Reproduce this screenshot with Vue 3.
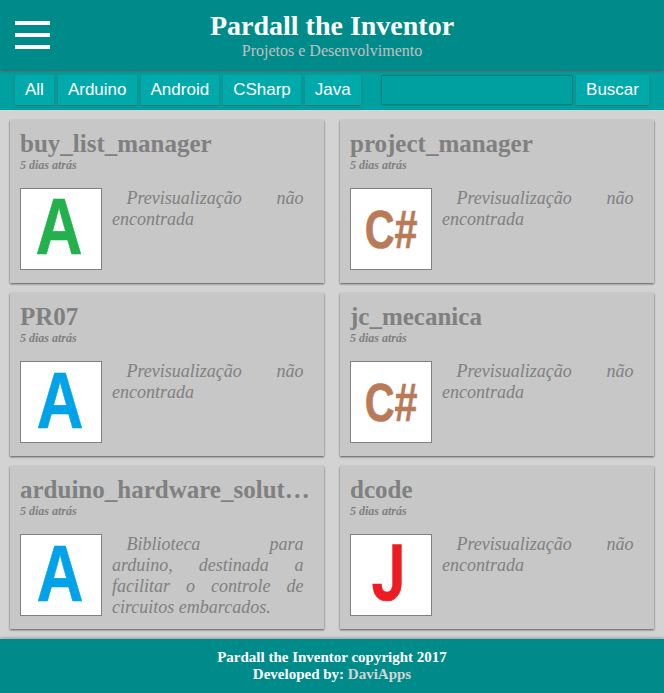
<script setup>
const filters = ['All', 'Arduino', 'Android', 'CSharp', 'Java']
const missing = 'Previsualização não encontrada'
const green = { text: 'A', color: '#22b14c', size: 80, weight: 0.5, transform: 'translate(14.5 64.8) scale(.815 1)' }
const blue = { text: 'A', color: '#00a2e8', size: 80, weight: 0.5, transform: 'translate(15.5 65.8) scale(.815 1)' }
const csharp = { text: 'C#', color: '#b97a57', size: 54, weight: 0.6, transform: 'translate(13.7 58.8) scale(.765 1)' }
const java = { text: 'J', color: '#ed1c24', size: 77, weight: 0.6, family: 'Roboto, sans-serif', transform: 'translate(20.6 65) scale(.78 1)' }
const projects = [
  { name: 'buy_list_manager', logo: green, description: missing },
  { name: 'project_manager', logo: csharp, description: missing },
  { name: 'PR07', logo: blue, description: missing },
  { name: 'jc_mecanica', logo: csharp, description: missing },
  { name: 'arduino_hardware_solutions', logo: blue, description: 'Biblioteca para arduino, destinada a facilitar o controle de circuitos embarcados.' },
  { name: 'dcode', logo: java, description: missing },
]
</script>

<template>
  <div class="page">
    <header class="header">
      <button class="menu" aria-label="Menu"><span></span><span></span><span></span></button>
      <div class="brand">
        <h1>Pardall the Inventor</h1>
        <p>Projetos e Desenvolvimento</p>
      </div>
    </header>
    <nav class="nav">
      <button v-for="f in filters" :key="f" class="btn">{{ f }}</button>
      <input class="search" type="text" />
      <button class="btn">Buscar</button>
    </nav>
    <main class="grid">
      <article v-for="p in projects" :key="p.name" class="card">
        <h2>{{ p.name }}</h2>
        <p class="date">5 dias atrás</p>
        <div class="content">
          <svg class="logo" viewBox="0 0 80 80">
            <text :fill="p.logo.color" :stroke="p.logo.color" :stroke-width="p.logo.weight" :font-family="p.logo.family" :font-size="p.logo.size" :transform="p.logo.transform">{{ p.logo.text }}</text>
          </svg>
          <p class="description">{{ p.description }}</p>
        </div>
      </article>
    </main>
    <footer class="footer">
      <p>Pardall the Inventor copyright 2017</p>
      <p>Developed by: <a>DaviApps</a></p>
    </footer>
  </div>
</template>

<style>
body { margin: 0; background: #d3d3d3; }
</style>

<style scoped>
* { box-sizing: border-box; }
h1, h2, p { margin: 0; }
.page {
  width: 664px;
  height: 693px;
  display: flex;
  flex-direction: column;
  overflow: hidden;
  background: #d3d3d3;
  font-family: "Liberation Serif", "Times New Roman", serif;
}
.header {
  position: relative;
  z-index: 1;
  flex: none;
  height: 70px;
  display: grid;
  grid-template-columns: 35px 1fr 35px;
  padding: 0 15px;
  background: #008b8b;
  box-shadow: 0 1px 3px #555;
}
.menu {
  height: 28px;
  margin: 21px 0 0;
  padding: 0;
  border: 0;
  background: none;
  display: flex;
  flex-direction: column;
  justify-content: space-between;
}
.menu span { width: 35px; height: 4px; background: #fff; }
.brand { padding-top: 10px; text-align: center; }
h1 { font-size: 28px; line-height: 32px; color: #fff; }
.brand p { font-size: 16px; line-height: 18px; color: #c0c0c0; }
.nav {
  flex: none;
  height: 40px;
  display: flex;
  gap: 4px;
  padding: 5px 15px;
  background: #00a0a0;
}
.btn {
  height: 30px;
  padding: 0 10px 1px;
  border: 0;
  background: #00aaaa;
  color: #fff;
  font: 17px/29px "Liberation Sans", Arial, sans-serif;
  box-shadow: 0 1px 2px #446d6d;
}
.search {
  width: 190px;
  height: 28px;
  margin: 1px 0 0 auto;
  border: 0;
  background: #00a0a0;
  box-shadow: 0 0 2px #033;
}
.grid {
  flex: 1;
  display: grid;
  grid-template-columns: 314px 314px;
  grid-auto-rows: 163px;
  column-gap: 16px;
  row-gap: 10px;
  padding: 10px;
}
.card {
  padding: 10px;
  background: #c7c7c7;
  color: #808080;
  box-shadow: 0 1px 2px #555;
}
h2 {
  font-size: 25px;
  line-height: 28px;
  overflow: hidden;
  text-overflow: ellipsis;
  white-space: nowrap;
}
.date { font-size: 12px; line-height: 14px; font-style: italic; font-weight: bold; }
.content { display: flex; gap: 10px; margin-top: 16px; }
.logo {
  flex: none;
  width: 82px;
  height: 82px;
  border: 1px solid #808080;
  background: #fff;
  font-family: "Liberation Sans", Arial, sans-serif;
  font-weight: bold;
}
.description {
  width: 191.5px;
  font-size: 18px;
  line-height: 21px;
  font-style: italic;
  text-align: justify;
  text-indent: 14.4px;
}
.footer {
  flex: none;
  height: 54px;
  padding-top: 10px;
  background: #008b8b;
  box-shadow: 0 -1px 3px #999;
  color: #fff;
  font-size: 15px;
  line-height: 17px;
  font-weight: bold;
  text-align: center;
}
.footer a { color: #d3d3d3; }
</style>
